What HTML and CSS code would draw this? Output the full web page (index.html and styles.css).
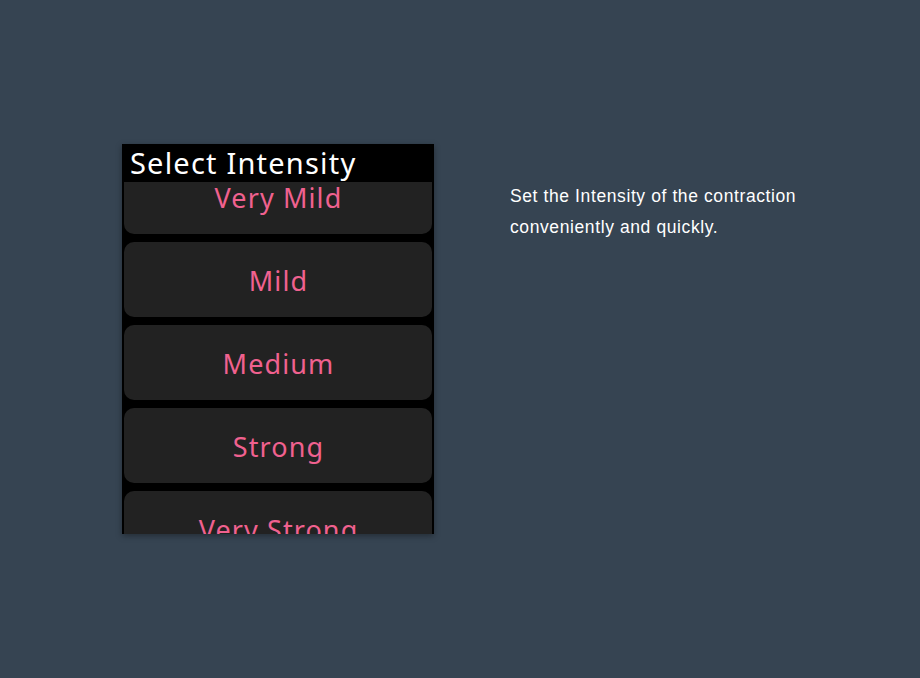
FILE: index.html
```html
<!DOCTYPE html>
<html>
<head>
<meta charset="utf-8">
<link rel="stylesheet" href="styles.css">
</head>
<body>
<div class="page">
  <div class="watch">
    <div class="header">Select Intensity</div>
    <div class="list">
      <div class="option">Very Mild</div>
      <div class="option">Mild</div>
      <div class="option">Medium</div>
      <div class="option">Strong</div>
      <div class="option">Very Strong</div>
    </div>
  </div>
  <p class="desc">Set the Intensity of the contraction<br>conveniently and quickly.</p>
</div>
</body>
</html>
```
FILE: styles.css
```css
html, body {
  margin: 0;
  padding: 0;
  background: #364452;
  height: 100%;
}
.page {
  display: flex;
  align-items: flex-start;
  padding: 144px 0 0 122px;
}
.watch {
  width: 312px;
  height: 390px;
  background: #000;
  overflow: hidden;
  box-shadow: 0 2px 6px rgba(0, 0, 0, 0.35);
  flex-shrink: 0;
}
.header {
  position: relative;
  z-index: 1;
  height: 38px;
  line-height: 38px;
  background: #000;
  color: #fff;
  font-family: "Noto Sans", sans-serif;
  font-size: 29px;
  padding-left: 8px;
  letter-spacing: 1.2px;
}
.list {
  margin-top: -23px;
  padding: 0 2px;
  display: flex;
  flex-direction: column;
  gap: 8px;
}
.option {
  box-sizing: border-box;
  height: 75px;
  padding-top: 2px;
  border-radius: 10px;
  background: #222222;
  color: #f0618f;
  font-family: "Noto Sans", sans-serif;
  font-size: 27px;
  line-height: 1;
  display: flex;
  align-items: center;
  justify-content: center;
  letter-spacing: 1.1px;
  text-indent: 1px;
  flex-shrink: 0;
}
.desc {
  margin: 37px 0 0 76px;
  color: #fff;
  font-family: "Liberation Sans", Arial, sans-serif;
  font-size: 17.5px;
  line-height: 31px;
  letter-spacing: 0.6px;
}
```
